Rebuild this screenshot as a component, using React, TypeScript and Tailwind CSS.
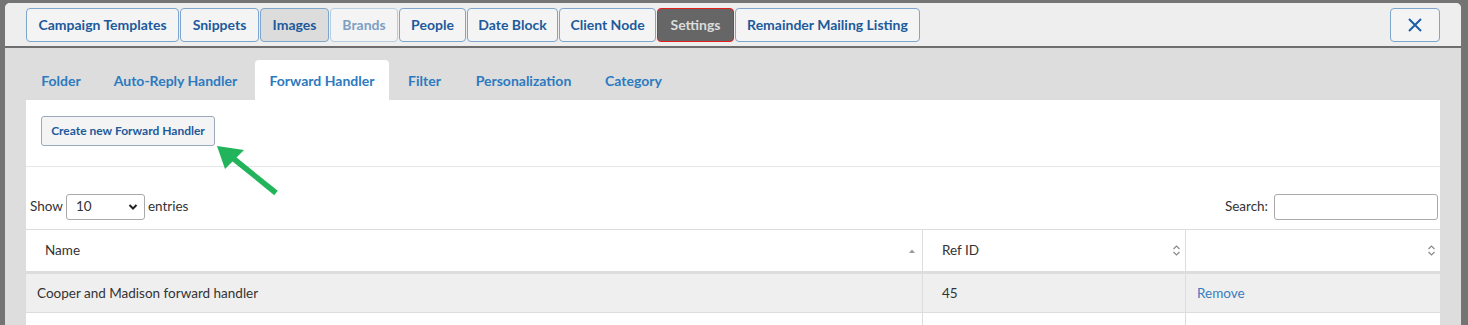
import type { ReactNode } from 'react'

const topButtons = [
  { label: 'Campaign Templates', w: 'w-[153px]' },
  { label: 'Snippets', w: 'w-[79px]' },
  { label: 'Images', w: 'w-[69px]', state: 'pressed' },
  { label: 'Brands', w: 'w-[68px]', state: 'disabled' },
  { label: 'People', w: 'w-[67px]' },
  { label: 'Date Block', w: 'w-[91px]' },
  { label: 'Client Node', w: 'w-[97px]' },
  { label: 'Settings', w: 'w-[77px]', state: 'active' },
  { label: 'Remainder Mailing Listing', w: 'w-[185px]' },
]

const tabs = [
  { label: 'Folder', w: 'w-[70px]' },
  { label: 'Auto-Reply Handler', w: 'w-[159px]' },
  { label: 'Forward Handler', w: 'w-[134px]', active: true },
  { label: 'Filter', w: 'w-[71px]' },
  { label: 'Personalization', w: 'w-[127px]' },
  { label: 'Category', w: 'w-[93px]' },
]

function TopButton({ label, w, state }: { label: string; w: string; state?: string }) {
  const base = `${w} h-[34px] rounded-[4px] border text-[14px] font-bold leading-none whitespace-nowrap`
  if (state === 'active')
    return <button className={`${base} bg-[#666666] border-[#e0201c] text-[#dcdcdc]`}>{label}</button>
  if (state === 'pressed')
    return <button className={`${base} bg-[#dcdcdc] border-[#7ea6cc] text-[#1d5a9c]`}>{label}</button>
  if (state === 'disabled')
    return <button className={`${base} bg-[#f4f4f4] border-[#b7cde2] text-[#7d9fc4]`}>{label}</button>
  return <button className={`${base} bg-[#f4f4f4] border-[#7ea6cc] text-[#1d5a9c]`}>{label}</button>
}

function SortIcon({ up }: { up?: boolean }) {
  if (up)
    return (
      <svg width="8" height="6" viewBox="0 0 8 6" className="shrink-0">
        <path d="M1 5 L4 1.5 L7 5 Z" fill="#9a9a9a" />
      </svg>
    )
  return (
    <svg width="9" height="13" viewBox="0 0 9 13" className="shrink-0">
      <path d="M1.5 5 L4.5 2 L7.5 5" fill="none" stroke="#8a8a8a" strokeWidth="1.2" />
      <path d="M1.5 8 L4.5 11 L7.5 8" fill="none" stroke="#8a8a8a" strokeWidth="1.2" />
    </svg>
  )
}

function HeadCell({ children, className }: { children?: ReactNode; className: string }) {
  return <div className={`flex items-center justify-between h-full ${className}`}>{children}</div>
}

export default function App() {
  return (
    <div
      className="w-[1468px] h-[325px] overflow-hidden bg-[#747474] pt-[3px] pl-[5px] pr-[7px]"
      style={{ fontFamily: 'Lato, "Noto Sans", sans-serif' }}
    >
      <div className="h-[322px] flex flex-col rounded-t-[5px] overflow-hidden bg-[#dddddd]">
        {/* modal header */}
        <div className="h-[45px] shrink-0 bg-[#eeeeee] border-b-[2px] border-[#6e6e6e] flex items-start pt-[5px] pl-[21px] pr-[21px]">
          <div className="flex gap-[1px]">
            {topButtons.map(b => <TopButton key={b.label} {...b} />)}
          </div>
          <button className="ml-auto w-[50px] h-[34px] rounded-[4px] border border-[#7ea6cc] bg-[#f4f4f4] flex items-center justify-center">
            <svg width="16" height="16" viewBox="0 0 16 16">
              <path d="M2 2 L14 14 M14 2 L2 14" stroke="#1d5ea8" strokeWidth="2" />
            </svg>
          </button>
        </div>

        {/* body */}
        <div className="flex-1 px-[21px] pt-[12px]">
          <div className="flex h-[40px]">
            {tabs.map(t => (
              <div
                key={t.label}
                className={`${t.w} flex items-center justify-center whitespace-nowrap text-[14px] font-bold text-[#2c7ac0] rounded-t-[4px] ${
                  t.active ? 'bg-white' : ''
                }`}
              >
                {t.label}
              </div>
            ))}
          </div>

          <div className="bg-white">
            <div className="px-[15px] pt-[16px] pb-[20px] border-b border-[#e6e6e6] relative">
              <button className="w-[174px] h-[30px] rounded-[3px] border border-[#9aaabb] bg-[#f4f4f4] text-[12px] font-bold text-[#1d5a9c] whitespace-nowrap">
                Create new Forward Handler
              </button>
              <svg width="80" height="60" viewBox="0 0 80 60" className="absolute left-[187px] top-[41px]">
                <path d="M63 52 L16 14" stroke="#22b45b" strokeWidth="5.5" />
                <path d="M4 5 L31 9 L12 28 Z" fill="#22b45b" />
              </svg>
            </div>

            <div className="flex items-center justify-between pl-[4px] pr-[2px] h-[62px] pt-[20px] pb-[3px] text-[13.5px] text-[#333333]">
              <div className="flex items-center gap-[3px]">
                <span>Show</span>
                <div className="w-[79px] h-[26px] border border-[#aaaaaa] rounded-[3px] flex items-center justify-between pl-[9px] pr-[6px] text-[13.5px]">
                  <span>10</span>
                  <svg width="10" height="8" viewBox="0 0 10 8">
                    <path d="M1.5 2 L5 5.5 L8.5 2" fill="none" stroke="#222" strokeWidth="2" />
                  </svg>
                </div>
                <span>entries</span>
              </div>
              <div className="flex items-center gap-[6px]">
                <span>Search:</span>
                <div className="w-[164px] h-[26px] border border-[#aaaaaa] rounded-[3px]" />
              </div>
            </div>

            {/* table */}
            <div className="border-t border-[#dddddd] text-[13.5px] text-[#333333]">
              <div className="grid grid-cols-[896px_263px_1fr] h-[44px] border-b-[3px] border-[#dddddd]">
                <HeadCell className="pl-[19px] pr-[6px]">
                  <span>Name</span>
                  <SortIcon up />
                </HeadCell>
                <HeadCell className="pl-[19px] pr-[4px] border-l border-[#dddddd]">
                  <span>Ref ID</span>
                  <SortIcon />
                </HeadCell>
                <HeadCell className="pl-[19px] pr-[4px] border-l border-[#dddddd]">
                  <span />
                  <SortIcon />
                </HeadCell>
              </div>
              <div className="grid grid-cols-[896px_263px_1fr] h-[39px] bg-[#efefef] border-b border-[#dddddd]">
                <div className="flex items-center pl-[11px]">Cooper and Madison forward handler</div>
                <div className="flex items-center pl-[19px] border-l border-[#dddddd]">45</div>
                <div className="flex items-center pl-[11px] border-l border-[#dddddd] text-[#3a7cc0]">Remove</div>
              </div>
              <div className="grid grid-cols-[896px_263px_1fr] h-[39px] bg-white">
                <div />
                <div className="border-l border-[#dddddd]" />
                <div className="border-l border-[#dddddd]" />
              </div>
            </div>
          </div>
        </div>
      </div>
    </div>
  )
}
